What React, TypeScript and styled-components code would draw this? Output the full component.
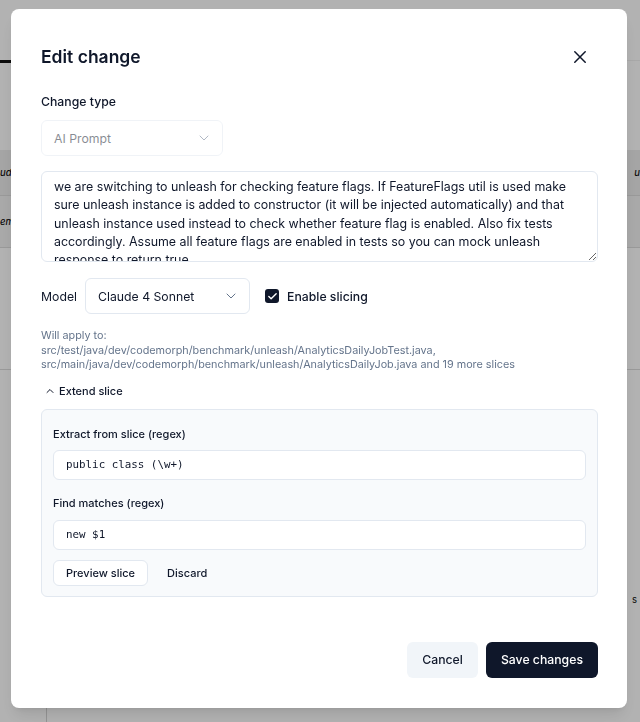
import React from "react";
import styled, { createGlobalStyle, css } from "styled-components";
import { ChevronDown, ChevronUp, Check } from "lucide-react";

const GlobalStyle = createGlobalStyle`
  html, body {
    margin: 0;
    padding: 0;
    background: #ffffff;
    font-family: Inter, "Noto Sans", "Liberation Sans", sans-serif;
    color: #0f172a;
  }
  * { box-sizing: border-box; }
`;

/* ---------- background page (behind the dialog) ---------- */

const Page = styled.div`
  width: 640px;
  height: 722px;
  overflow: hidden;
  display: flex;
  flex-direction: column;
  background: #ffffff;
`;

const BgNav = styled.div`
  height: 60px;
  flex: none;
`;

const BgTabs = styled.div`
  height: 90px;
  flex: none;
  display: flex;
  align-items: flex-start;
  border-top: 1px solid #f1f1f1;
`;

const BgTab = styled.div`
  width: 40px;
  height: 3px;
  margin-top: -1px;
  background: #111111;
`;

const BgTable = styled.div`
  display: flex;
  flex-direction: column;
  flex: 1;
`;

const BgRow = styled.div<{ $bg: string; $h: number }>`
  height: ${(p) => p.$h}px;
  flex: none;
  background: ${(p) => p.$bg};
  border-bottom: 1px solid #dcdcdc;
  display: flex;
  align-items: center;
  justify-content: space-between;
  font-size: 9.5px;
  font-style: italic;
  font-weight: 500;
  color: #111;
`;

const BgBody = styled.div`
  flex: 1;
  display: flex;
  align-items: stretch;
  justify-content: space-between;
  font-size: 9.5px;
  color: #111;
`;

const BgSideCol = styled.div`
  width: 47px;
  border-right: 1px solid #d4d4d4;
`;

const BgEndCell = styled.span`
  align-self: flex-start;
  margin-top: 224px;
  padding-right: 3px;
`;

const BgCell = styled.span``;

/* ---------- overlay + dialog ---------- */

const Overlay = styled.div`
  position: fixed;
  inset: 0;
  background: rgba(0, 0, 0, 0.3);
  display: flex;
  align-items: flex-start;
  padding: 9px 13px 0 11px;
`;

const Dialog = styled.div`
  width: 616px;
  background: #ffffff;
  border-radius: 8px;
  padding: 34px 29px 30px 30px;
  display: flex;
  flex-direction: column;
  box-shadow: 0 10px 15px -3px rgba(0, 0, 0, 0.1), 0 4px 6px -4px rgba(0, 0, 0, 0.1);
`;

const Header = styled.div`
  display: flex;
  align-items: center;
  justify-content: space-between;
  height: 28px;
`;

const Title = styled.h2`
  margin: 0;
  font-size: 17.5px;
  line-height: 28px;
  font-weight: 600;
  color: #0f172a;
`;

const CloseButton = styled.button`
  width: 24px;
  height: 24px;
  margin-right: 6px;
  padding: 0;
  border: none;
  background: transparent;
  display: flex;
  align-items: center;
  justify-content: center;
  color: #0f172a;
`;

const Label = styled.div<{ $top: number }>`
  margin-top: ${(p) => p.$top}px;
  font-size: 12.25px;
  line-height: 20px;
  font-weight: 500;
  color: #0f172a;
`;

const SelectBox = styled.div<{ $width: number; $disabled?: boolean; $top?: number }>`
  width: ${(p) => p.$width}px;
  height: 36px;
  flex: none;
  margin-top: ${(p) => p.$top ?? 0}px;
  padding: 0 10px 0 12px;
  border: 1px solid #e2e8f0;
  border-radius: 6px;
  background: #ffffff;
  display: flex;
  align-items: center;
  justify-content: space-between;
  font-size: 12.25px;
  color: #0f172a;
  ${(p) =>
    p.$disabled &&
    css`
      opacity: 0.5;
    `}
  svg {
    color: #64748b;
  }
`;

const PromptArea = styled.textarea`
  margin-top: 15px;
  width: 100%;
  height: 91px;
  padding: 6px 12px;
  border: 1px solid #e2e8f0;
  border-radius: 6px;
  font-family: inherit;
  font-size: 12.4px;
  line-height: 18.33px;
  color: #0f172a;
  resize: vertical;
  outline: none;
  overflow: hidden;
`;

const ModelRow = styled.div`
  margin-top: 16px;
  height: 36px;
  display: flex;
  align-items: center;
  gap: 15px;
`;

const ModelField = styled.div`
  display: flex;
  align-items: center;
  gap: 8px;
  font-size: 12.25px;
  color: #0f172a;
`;

const CheckRow = styled.label`
  display: flex;
  align-items: center;
  gap: 8px;
  font-size: 12.25px;
  font-weight: 500;
  color: #0f172a;
`;

const CheckBox = styled.span`
  width: 14px;
  height: 14px;
  border-radius: 3px;
  background: #0f172a;
  display: flex;
  align-items: center;
  justify-content: center;
  color: #ffffff;
`;

const ApplyInfo = styled.div`
  margin-top: 15px;
  font-size: 10.8px;
  line-height: 14.5px;
  color: #64748b;
`;

const ToggleButton = styled.button`
  margin-top: 10px;
  align-self: flex-start;
  height: 16px;
  padding: 0 0 0 3px;
  border: none;
  background: transparent;
  display: flex;
  align-items: center;
  gap: 3px;
  font-family: inherit;
  font-size: 11px;
  font-weight: 500;
  color: #0f172a;
`;

const SlicePanel = styled.div`
  margin-top: 10px;
  border: 1px solid #e2e8f0;
  border-radius: 6px;
  background: #f8fafc;
  padding: 16px 11px 10px 11px;
  display: flex;
  flex-direction: column;
`;

const PanelLabel = styled.div<{ $top: number }>`
  margin-top: ${(p) => p.$top}px;
  font-size: 11px;
  line-height: 16px;
  font-weight: 500;
  color: #0f172a;
`;

const CodeInput = styled.input<{ $top: number }>`
  margin-top: ${(p) => p.$top}px;
  width: 100%;
  height: 30px;
  padding: 0 12px;
  border: 1px solid #e2e8f0;
  border-radius: 6px;
  background: #ffffff;
  font-family: "DejaVu Sans Mono", "Liberation Mono", monospace;
  font-size: 10.85px;
  color: #0f172a;
  outline: none;
`;

const PanelActions = styled.div`
  margin-top: 10px;
  display: flex;
  align-items: center;
  gap: 6px;
`;

const SmallButton = styled.button<{ $ghost?: boolean }>`
  height: 26px;
  padding: 0 12px;
  border-radius: 6px;
  font-family: inherit;
  font-size: 11px;
  font-weight: 500;
  color: #0f172a;
  background: ${(p) => (p.$ghost ? "transparent" : "#ffffff")};
  border: 1px solid ${(p) => (p.$ghost ? "transparent" : "#e2e8f0")};
`;

const Footer = styled.div`
  margin-top: 45px;
  display: flex;
  justify-content: flex-end;
  gap: 8px;
`;

const FooterButton = styled.button<{ $primary?: boolean }>`
  height: 36px;
  padding: 0 15px;
  border: none;
  border-radius: 6px;
  font-family: inherit;
  font-size: 12.25px;
  font-weight: 500;
  background: ${(p) => (p.$primary ? "#0f172a" : "#f1f5f9")};
  color: ${(p) => (p.$primary ? "#ffffff" : "#0f172a")};
`;

const PROMPT =
  "we are switching to unleash for checking feature flags. If FeatureFlags util is used make sure unleash instance is added to constructor (it will be injected automatically) and that unleash instance used instead to check whether feature flag is enabled. Also fix tests accordingly. Assume all feature flags are enabled in tests so you can mock unleash response to return true.";

export default function App() {
  return (
    <>
      <GlobalStyle />
      <Page>
        <BgNav />
        <BgTabs>
          <BgTab />
        </BgTabs>
        <BgTable>
          <BgRow $bg="#ececec" $h={46}>
            <BgCell>ud</BgCell>
            <BgCell>u</BgCell>
          </BgRow>
          <BgRow $bg="#f2f2f2" $h={52}>
            <BgCell>em</BgCell>
            <BgCell></BgCell>
          </BgRow>
          <BgRow $bg="#ffffff" $h={122}>
            <BgCell></BgCell>
          </BgRow>
          <BgBody>
            <BgSideCol />
            <BgEndCell>s</BgEndCell>
          </BgBody>
        </BgTable>
      </Page>
      <Overlay>
        <Dialog>
          <Header>
            <Title>Edit change</Title>
            <CloseButton aria-label="Close">
              <svg width="12" height="12" viewBox="0 0 12 12" fill="none" stroke="currentColor" strokeWidth="1.5" strokeLinecap="round">
                <path d="M0.8 0.8 L11.2 11.2 M11.2 0.8 L0.8 11.2" />
              </svg>
            </CloseButton>
          </Header>

          <Label $top={21}>Change type</Label>
          <SelectBox $width={182} $disabled $top={8}>
            <span>AI Prompt</span>
            <ChevronDown size={16} strokeWidth={1.5} />
          </SelectBox>

          <PromptArea defaultValue={PROMPT} />

          <ModelRow>
            <ModelField>
              <span>Model</span>
              <SelectBox $width={165}>
                <span>Claude 4 Sonnet</span>
                <ChevronDown size={16} strokeWidth={1.5} />
              </SelectBox>
            </ModelField>
            <CheckRow>
              <CheckBox>
                <Check size={11} strokeWidth={3} />
              </CheckBox>
              Enable slicing
            </CheckRow>
          </ModelRow>

          <ApplyInfo>
            <div>Will apply to:</div>
            <div>
              src/test/java/dev/codemorph/benchmark/unleash/AnalyticsDailyJobTest.java,
              src/main/java/dev/codemorph/benchmark/unleash/AnalyticsDailyJob.java and 19 more slices
            </div>
          </ApplyInfo>

          <ToggleButton>
            <ChevronUp size={12} strokeWidth={2} />
            Extend slice
          </ToggleButton>

          <SlicePanel>
            <PanelLabel $top={0}>Extract from slice (regex)</PanelLabel>
            <CodeInput $top={8} readOnly value={"public class (\\w+)"} />
            <PanelLabel $top={15}>Find matches (regex)</PanelLabel>
            <CodeInput $top={9} readOnly value={"new $1"} />
            <PanelActions>
              <SmallButton>Preview slice</SmallButton>
              <SmallButton $ghost>Discard</SmallButton>
            </PanelActions>
          </SlicePanel>

          <Footer>
            <FooterButton>Cancel</FooterButton>
            <FooterButton $primary>Save changes</FooterButton>
          </Footer>
        </Dialog>
      </Overlay>
    </>
  );
}
